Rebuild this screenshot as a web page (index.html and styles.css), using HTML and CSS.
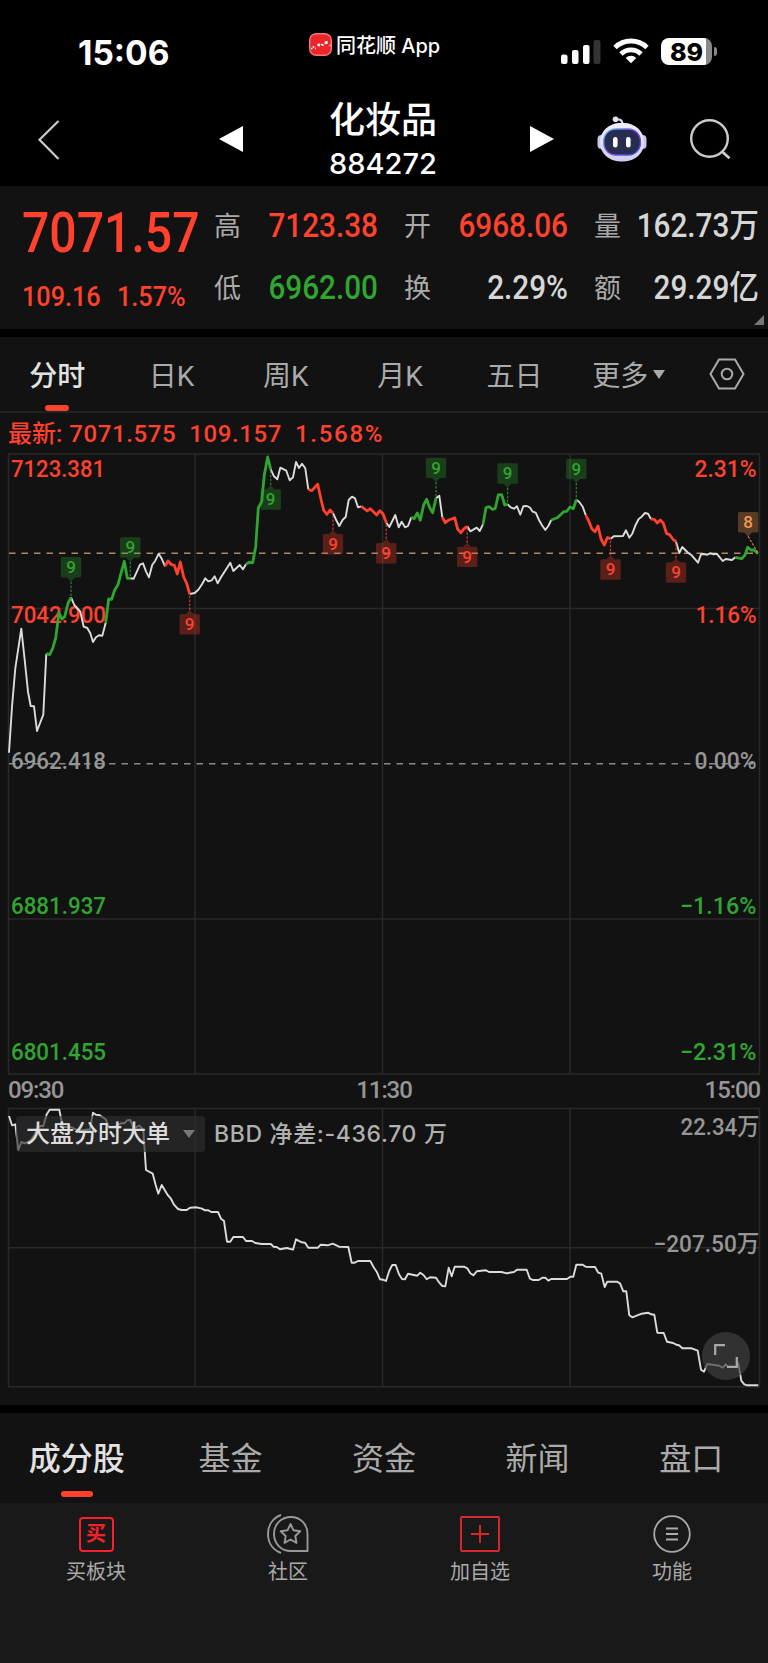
FILE: index.html
```html
<!DOCTYPE html>
<html lang="zh-CN">
<head>
    <meta charset="UTF-8">
    <meta name="viewport" content="width=device-width, initial-scale=1.0">
    <title>化妆品 884272</title>
    <link rel="stylesheet" href="styles.css">
</head>
<body>
    <!-- Status bar -->
    <div class="status">
        <div class="clock">15:06</div>
        <div class="app-name">
            <svg width="23" height="23" viewBox="0 0 23 23">
                <rect x="0.7" y="0.7" width="21.6" height="21.6" rx="6.5" fill="#ec2529" stroke="#f4777a" stroke-width="1.4"/>
                <path d="M2 15.5h1.5M4.5 15v-2M6 15.5h1M8.5 12.5l.8-1M10 10.5v3M12 12l1-1M13.8 11v2M15.500 10h1M17.500 8.500v2M20.500 12.500h1" stroke="#fff" stroke-width="1.5" fill="none"/>
                <rect x="16" y="8" width="2.500" height="3" fill="#fff"/>
            </svg>
            <span>同花顺 App</span>
        </div>
        <div class="status-icons">
            <svg width="40" height="24" viewBox="0 0 40 24">
                <rect x="0" y="14.500" width="6.500" height="9.500" rx="2" fill="#fff"/>
                <rect x="11" y="10" width="6.500" height="14" rx="2" fill="#fff"/>
                <rect x="22" y="5" width="6.500" height="19" rx="2" fill="#fff"/>
                <rect x="32.500" y="0" width="7" height="24" rx="2" fill="#333"/>
            </svg>
            <svg width="36" height="26" viewBox="0 0 36 26" fill="none" stroke="#fff" stroke-width="4.800">
                <path d="M2 9.500a23 23 0 0 1 32 0"/>
                <path d="M8 16a14.200 14.200 0 0 1 20 0"/>
                <path d="M18 25.300l-5.300-5.400a7.600 7.600 0 0 1 10.600 0z" fill="#fff" stroke="none"/>
            </svg>
            <div class="battery"><span>89</span></div>
        </div>
    </div>

    <!-- Title bar -->
    <div class="nav">
        <svg class="back" width="24" height="42" viewBox="0 0 24 42"><path d="M21.500 2L2.500 20.700L21.500 40" fill="none" stroke="#ccc" stroke-width="2.200"/></svg>
        <svg class="prev" width="24" height="26" viewBox="0 0 24 26"><path d="M24 0v26L0 13z" fill="#fff"/></svg>
        <div class="title">
            <h1>化妆品</h1>
            <p>884272</p>
        </div>
        <svg class="next" width="24" height="26" viewBox="0 0 24 26"><path d="M0 0v26L24 13z" fill="#fff"/></svg>
        <svg class="robot" width="50" height="46" viewBox="0 0 50 46">
            <defs>
                <linearGradient id="shell" x1="0" y1="0" x2="0" y2="1"><stop offset="0" stop-color="#f2f0fd"/><stop offset="1" stop-color="#cdcdee"/></linearGradient>
                <linearGradient id="rim" x1="0" y1="0" x2="1" y2="1"><stop offset="0" stop-color="#50c8e8"/><stop offset="0.500" stop-color="#8b45e8"/><stop offset="1" stop-color="#3553d8"/></linearGradient>
            </defs>
            <path d="M18.500 3.500h3.500q3.500.5 3.500 5" fill="none" stroke="#d9d8f2" stroke-width="2.200"/>
            <circle cx="18.500" cy="3.300" r="2.800" fill="#e2e1f7"/>
            <rect x="0.500" y="19" width="8" height="14" rx="4" fill="#c7c6e6"/>
            <rect x="41.500" y="19" width="8" height="14" rx="4" fill="#c7c6e6"/>
            <rect x="3" y="7" width="44" height="38.500" rx="20" ry="18.500" fill="url(#shell)"/>
            <rect x="6.800" y="13" width="36.600" height="26" rx="12" fill="#262d50" stroke="url(#rim)" stroke-width="1.300"/>
            <rect x="16" y="21" width="4.600" height="10.500" rx="2.300" fill="#fff"/>
            <rect x="29" y="21" width="4.600" height="10.500" rx="2.300" fill="#fff"/>
        </svg>
        <svg class="search" width="42" height="42" viewBox="0 0 42 42" fill="none" stroke="#ccc" stroke-width="2.400"><circle cx="19.500" cy="19.500" r="18.300"/><path d="M32 32.500l7.500 6.800" stroke-width="2.800"/></svg>
    </div>

    <!-- Quote -->
    <div class="quote">
        <div class="price">
            <strong class="num">7071.57</strong>
            <div class="change"><span class="num">109.16</span><span class="num">1.57%</span></div>
        </div>
        <div class="stats">
            <label>高</label><b class="num up">7123.38</b>
            <label>开</label><b class="num up">6968.06</b>
            <label>量</label><b class="num">162.73<i>万</i></b>
            <label>低</label><b class="num down">6962.00</b>
            <label>换</label><b class="num">2.29%</b>
            <label>额</label><b class="num">29.29<i>亿</i></b>
        </div>
        <div class="corner"></div>
    </div>

    <!-- Period tabs -->
    <div class="periods">
        <div class="tab active">分时</div>
        <div class="tab">日K</div>
        <div class="tab">周K</div>
        <div class="tab">月K</div>
        <div class="tab">五日</div>
        <div class="tab">更多<span class="caret"></span></div>
        <div class="setting">
            <svg width="36" height="32" viewBox="0 0 36 32" fill="none" stroke="#aaa" stroke-width="2"><path d="M10 1.500h16L34.500 16L26 30.500H10L1.500 16z"/><circle cx="18" cy="16" r="5.300"/></svg>
        </div>
    </div>

    <div class="latest"><span>最新:</span><span>7071.575</span><span>109.157</span><span>1.568%</span></div>

    <!-- Price chart -->
    <svg class="chart" width="768" height="626" viewBox="0 452 768 626">
        <g class="grid">
            <path d="M8.500 454H759.500V1074H8.500z"/>
            <path d="M195 454V1074M382.500 454V1074M570 454V1074M8 608.500H759M8 919H759"/>
        </g>
        <path class="base" d="M9 763.700H759"/>
        <path class="avg" d="M9 553.300H759"/>
        <g class="axis">
            <text class="up" x="11" y="477.300" textLength="94" lengthAdjust="spacingAndGlyphs">7123.381</text>
            <text class="up" x="11" y="623" textLength="95" lengthAdjust="spacingAndGlyphs">7042.900</text>
            <text x="11" y="768.500" textLength="95" lengthAdjust="spacingAndGlyphs">6962.418</text>
            <text class="down" x="11" y="914" textLength="95" lengthAdjust="spacingAndGlyphs">6881.937</text>
            <text class="down" x="11" y="1059.500" textLength="95" lengthAdjust="spacingAndGlyphs">6801.455</text>
            <text class="up" x="694.500" y="477.300" textLength="62" lengthAdjust="spacingAndGlyphs">2.31%</text>
            <text class="up" x="695.500" y="623" textLength="61" lengthAdjust="spacingAndGlyphs">1.16%</text>
            <text x="694.500" y="768.500" textLength="62" lengthAdjust="spacingAndGlyphs">0.00%</text>
            <text class="down" x="680" y="914" textLength="76.500" lengthAdjust="spacingAndGlyphs">−1.16%</text>
            <text class="down" x="680" y="1059.500" textLength="76.500" lengthAdjust="spacingAndGlyphs">−2.31%</text>
        </g>
        <g class="line">
            <polyline points="9,752.700 12,706.700 15.300,668.300 21.300,628.700 24.700,660 28,691.700 30.700,706 34,706.300 37,731 43.300,714.700 46.300,653.700"/>
            <polyline points="71,597.300 74.300,605 80.300,611.700 83.700,626.700 87.300,628 90.300,633.300 93,642 96,637.300 99,635.300 102.300,635.700 105.700,622.700"/>
            <polyline points="130.300,578.300 133.700,578.700 140,564.700 143,563.300 146,571.300 149,577.300 152.300,564.700 155.300,560.700 158.700,553.700 161.700,558.700 165,566.300"/>
            <polyline points="189.700,594 194.700,593 198.300,589.700 202,584.300 205.300,578.300 208.300,581.300 211.700,580.300 214.700,576.300 217.700,583.300 221,577.300 230.300,562.700 233.300,571 239.700,565 243,569.300 246,564.300"/>
            <polyline points="270.700,469.300 274,476.300 277.300,479.300 280.300,467.700 286.300,470.700 289.700,480.300 293,477.300 296,462 299,468 302,463.700 305.300,468.300 308.300,489.300"/>
            <polyline points="333,513 336.300,520.300 339.300,526 342.700,519.700 345.700,517 348.700,500 352,496.700 355,498.300 358,507.300 361.300,506.300"/>
            <polyline points="386.300,522.700 389.300,527 395.300,515 398.700,527.300 401.700,521.700 405,527.300 408,526 411.300,517.300"/>
            <polyline points="436,498.300 439.300,495.700 442.300,517.300"/>
            <polyline points="467.300,526.300 470.300,531.300 476.700,527.700 479.700,531 483,524.300"/>
            <polyline points="507.700,504.300 510.700,507.300 514,508.700 517,506.300 520.300,514.700 523.300,506.300 526.700,506 529.700,507.300 532.700,511.700 535.700,512.700 539,520 542,525.300 545.300,530 548.300,526 551.300,520"/>
            <polyline points="576.300,499.700 579.300,502 582.700,506.700 585.700,515"/>
            <polyline points="610.700,538.700 613.700,536.300 623,536 626,530.300 629.300,537.700 632.300,533.700 635.700,524.700 638.700,519 641.700,516.700 645,513 648,513.700 651,519"/>
            <polyline points="676,541.700 679.300,553 682.300,547 688.300,553 691.700,555.300 698,562.700 701,554.300 704,554 707.300,554.700 710.300,553.300 713.300,554.300 716.700,553.700 722.700,561 725.700,559 732,560 735.300,557.300"/>
        </g>
        <g class="line rise">
            <polyline points="46.300,653.700 49.700,654.700 52.700,648.300 55.700,638 59,613 62,619 64.700,616.700 68,603.300 71,597.300"/>
            <polyline points="105.700,622.700 108.700,599 111.700,599.300 114.700,590 118,584.700 121,573.300 124.300,561.300 127.300,578.300 130.300,578.300"/>
            <polyline points="246,564.300 249.300,562.300 252.700,562.700 255.700,546.700 258.300,508 261.700,501.700 264.300,475 267.700,457 270.700,469.300"/>
            <polyline points="411.300,517.300 414.300,518.700 417.300,513 420.300,520.300 423.700,504.700 426.700,499.300 429.700,507.700 432.700,512.700 436,498.300"/>
            <polyline points="483,524.300 486,507.700 489.300,506.700 492.300,509.300 495.300,508.300 498.300,495 501.700,494.700 504.700,505 507.700,504.300"/>
            <polyline points="551.300,520 557.300,517.700 563.700,511.700 566.700,511.300 570,507 573.300,508.700 576.300,499.700"/>
            <polyline points="735.300,557.300 741.700,558.700 745,555 747.700,547.300 751,550 754,550 758,553.700"/>
        </g>
        <g class="line fall">
            <polyline points="165,566.300 168,561 171,564.300 174.300,565.300 177.300,574 180.300,562 183.700,577 186.700,583.300 189.700,594"/>
            <polyline points="308.300,489.300 311.700,490.700 317.700,484.300 321,499.300 323.700,510.300 327,514.300 330,510 333,513"/>
            <polyline points="361.300,506.300 367.300,511 370.300,508.700 376.700,515 379.700,510.700 383,513.700 386.300,522.700"/>
            <polyline points="442.300,517.300 445.300,522.700 448.300,520.300 454.700,517.700 457.700,529.300 461,532.700 464,528.700 467.300,526.300"/>
            <polyline points="585.700,515 589,521.700 592,529 595,531.700 598,526 601,539 604.300,545 607.300,537.700 610.700,538.700"/>
            <polyline points="651,519 654.300,519.300 657.300,523 660.300,520 663.300,523.300 666.700,533.700 669.700,534.700 673,539.300 676,541.700"/>
        </g>
        <g id="marks"></g>
    </svg>

    <div class="times"><span>09:30</span><span>11:30</span><span>15:00</span></div>

    <!-- BBD chart -->
    <div class="bbd">
        <svg class="chart" width="768" height="299" viewBox="0 1106 768 299">
            <g class="grid">
                <path d="M8.500 1108.500H759.500V1386.700H8.500z"/>
                <path d="M195 1108V1387M382.500 1108V1387M570 1108V1387M8 1247.700H759"/>
            </g>
            <g class="axis">
                <text x="680.500" y="1134.500" textLength="79" lengthAdjust="spacingAndGlyphs">22.34万</text>
                <text x="653.500" y="1252" textLength="106" lengthAdjust="spacingAndGlyphs">−207.50万</text>
            </g>
            <g class="line">
                <polyline points="9,1116 12,1125.300 15.300,1124.300 18.300,1150 21.300,1142 24.700,1143.300 28,1142 31,1140 34.300,1135 37.300,1129.300 40.300,1126 43.300,1126 46.700,1114.300 49.700,1109.700 59.300,1109.700 62.700,1126.700 71.700,1127.300 78.300,1130.700 90,1129.300 93,1112.700 96,1114.700 99.300,1115 105.700,1119.300 108.700,1126.700 115,1126.700 121,1123.300 124.300,1123.300 127.300,1120.300 130.300,1120 133.300,1128.300 139.700,1125.700 143.300,1130 146,1170 152.700,1173.700 155.700,1185 158.300,1193.700 161.700,1185 167.700,1195 170.700,1198.300 174,1204.700 178,1209 181.700,1210 186.700,1210 190,1207.700 196.700,1207.300 202,1208.700 205,1210.300 208.300,1210.300 211.300,1212 218,1212 221,1218.700 224,1221 227,1241.700 230.300,1241.700 233.300,1237 243,1237 246,1241 252,1241 255.300,1243 261.700,1244 270.700,1244 273.700,1246.700 276.700,1247 280,1249.300 286.700,1248 293,1249.700 296,1239.300 301.700,1242.300 305,1242.700 308.300,1247.700 318,1247.700 320.700,1244.700 327.700,1245.300 332.700,1243.700 339,1246.700 348.300,1247 351.700,1262.700 354.700,1262.700 358,1261 370.300,1261 373.700,1267.300 376.700,1271.700 380,1279.300 383,1279.700 386,1281 389.300,1270.700 392.300,1265 395.700,1265 399,1274.300 402,1279 405,1279.300 408,1273.700 417.300,1275.700 420.300,1272.700 423.700,1275.300 426.700,1279.300 430,1277.300 436,1277.700 439.300,1282.700 442.300,1286 445.300,1286.300 448.700,1267.700 451.700,1276.300 454.700,1266.700 464,1266.700 467.300,1268.300 470.300,1273.300 473.300,1275.300 476.700,1271.300 486,1270.300 489,1272 501.700,1272 506.700,1273.300 514,1272 517,1269.700 526.700,1269.700 529.700,1278.300 532.700,1280 538.700,1280 542.300,1277.700 545.300,1277.700 548.300,1280.700 551.300,1279 567,1279 570.300,1276.700 573.300,1276.700 576.300,1264.700 582.700,1264.700 585.700,1266.700 595,1267 598.300,1272.700 601.300,1273.700 604.700,1287 607.300,1281.700 617,1281.700 620,1283.300 623.300,1291.300 626.300,1291.300 629.300,1315.300 632.300,1317.300 641.700,1313.700 648,1312.700 651.300,1314.300 654.300,1314.700 657.300,1332.700 663.700,1333 667,1341.700 673,1343 676.300,1344.700 679,1345.300 682.300,1348.300 691.700,1348.300 697.700,1350.700 701,1369.700 704,1371.700 707.300,1364 719.300,1365.700 722.700,1367.700 725.700,1364.300 728,1367 736,1367 738.300,1363.300 741.300,1380.700 744.300,1384.300 747.300,1385.300 758.300,1385.300"/>
            </g>
        </svg>
        <div class="bbd-head">
            <div class="picker">大盘分时大单<span class="caret"></span></div>
            <div class="bbd-value">BBD 净差:-436.70 万</div>
        </div>
        <div class="expand">
            <svg width="24" height="24" viewBox="0 0 24 24" fill="none" stroke="#aaa" stroke-width="2.200"><path d="M1.200 11V1.200H11M13 22.800H22.800V13"/></svg>
        </div>
    </div>

    <!-- Section tabs -->
    <div class="sections">
        <div class="tab active">成分股</div>
        <div class="tab">基金</div>
        <div class="tab">资金</div>
        <div class="tab">新闻</div>
        <div class="tab">盘口</div>
    </div>

    <!-- Bottom bar -->
    <div class="toolbar">
        <div class="tool">
            <div class="buy-icon">买</div>
            <span>买板块</span>
        </div>
        <div class="tool">
            <svg width="42" height="40" viewBox="0 0 42 40" fill="none" stroke="#999" stroke-width="1.900">
                <path d="M24 3C14 3 7 10.500 7 20S14 37 24 37H40.500V20C40.500 10.500 33.500 3 24 3z"/>
                <path d="M14 1C6 4 1 11 1 20S6 36 14 39"/>
                <path d="M23.500 10l3 6.300 6.800.9-5 4.800 1.200 6.800-6-3.300-6 3.300 1.200-6.800-5-4.800 6.800-.9z" stroke-linejoin="round"/>
            </svg>
            <span>社区</span>
        </div>
        <div class="tool">
            <svg width="40" height="36" viewBox="0 0 40 36" fill="none" stroke="#d9282d" stroke-width="1.900"><rect x="1" y="1" width="38" height="34" rx="1"/><path d="M20 9v18M11 18h18"/></svg>
            <span>加自选</span>
        </div>
        <div class="tool">
            <svg width="38" height="38" viewBox="0 0 38 38" fill="none" stroke="#aaa" stroke-width="1.800"><circle cx="19" cy="19" r="17.800"/><path d="M13 13.500h12M13 19h12M13 24.500h12" stroke-width="2.200"/></svg>
            <span>功能</span>
        </div>
    </div>

    <script>
        // x, top of the box, side the pointer is on, end of the dotted stem, type
        const marks = [
            [71, 557, 'down', 597, 'rise'],
            [130.3, 537.3, 'down', 578, 'rise'],
            [189.7, 614, 'up', 594, 'fall'],
            [270.7, 489.3, 'up', 469, 'rise'],
            [333, 534, 'up', 513, 'fall'],
            [386.2, 543, 'up', 523, 'fall'],
            [436, 457.7, 'down', 498, 'rise'],
            [467.2, 546.7, 'up', 526, 'fall'],
            [507.6, 463.3, 'down', 504, 'rise'],
            [576.3, 458.7, 'down', 500, 'rise'],
            [610.5, 559.3, 'up', 539, 'fall'],
            [676, 562.3, 'up', 542, 'fall'],
            [748.2, 512, 'down', 553, 'warn']
        ];

        document.getElementById('marks').innerHTML = marks.map(([x, y, side, end, type]) => {
            const base = side === 'down' ? y + 20.4 : y;
            const tip = side === 'down' ? base + 4 : base - 4;
            const endX = type === 'warn' ? 758 : x;
            return `
                <g class="mark ${type}">
                    <path class="stem" d="M${x} ${tip}L${endX} ${end}"/>
                    <rect x="${x - 10.2}" y="${y}" width="20.4" height="20.4" rx="1.5"/>
                    <path class="tip" d="M${x - 4} ${base}L${x} ${tip}L${x + 4} ${base}z"/>
                    <text x="${x}" y="${y + 16}">${type === 'warn' ? 8 : 9}</text>
                </g>`;
        }).join('');
    </script>
</body>
</html>
```
FILE: styles.css
```css
* {
    box-sizing: border-box;
}
body {
    margin: 0;
    width: 768px;
    height: 1663px;
    overflow: hidden;
    background: #000;
    color: #d6d6d6;
    font-family: Roboto, "Noto Sans CJK SC", sans-serif;
}
h1, p {
    margin: 0;
    font-weight: 500;
}
svg {
    display: block;
    flex: none;
}
.up {
    color: #ff412e;
    fill: #ff412e;
}
.down {
    color: #30a530;
    fill: #30a530;
}
.caret {
    border: 6px solid transparent;
    border-top: 9px solid #aaa;
    border-bottom: 0;
}

/* status bar */
.status {
    height: 92px;
    padding: 0 51px 0 78px;
    display: flex;
    color: #fff;
    font-family: Inter, "Noto Sans CJK SC", sans-serif;
}
.clock {
    width: 231px;
    padding-top: 33px;
    font-size: 33.5px;
    line-height: 40px;
    font-weight: 700;
}
.app-name {
    width: 252px;
    padding-top: 33px;
    display: flex;
    gap: 4px;
    font-size: 20px;
    line-height: 27px;
    font-weight: 500;
    white-space: nowrap;
}
.status-icons {
    display: flex;
    align-items: flex-start;
    padding-top: 38px;
}
.status-icons svg:nth-child(1) {
    margin-top: 2px;
}
.status-icons svg:nth-child(2) {
    margin-left: 12px;
}
.battery {
    position: relative;
    width: 51px;
    height: 27px;
    margin-left: 12px;
    border-radius: 8px;
    background: linear-gradient(90deg, #fff 45px, #888 45px);
    color: #000;
    font-size: 25px;
    line-height: 28px;
    font-weight: 800;
    text-align: center;
}
.battery::after {
    content: "";
    position: absolute;
    right: -5px;
    top: 9px;
    width: 3px;
    height: 9px;
    border-radius: 0 3px 3px 0;
    background: #888;
}

/* title bar */
.nav {
    height: 94px;
    display: flex;
    align-items: flex-start;
    padding-left: 37px;
}
.back {
    margin-top: 27px;
}
.prev {
    margin: 34px 0 0 158px;
}
.title {
    width: 287px;
    height: 94px;
    padding: 3px 7px 0 0;
    color: #fff;
    text-align: center;
}
.title h1 {
    font-size: 36px;
    line-height: 52px;
}
.title p {
    font-family: Inter, sans-serif;
    font-size: 29px;
    line-height: 34px;
}
.next {
    margin-top: 34px;
}
.robot {
    margin: 24px 0 0 43px;
}
.search {
    margin: 27px 0 0 43px;
}

/* quote */
.quote {
    position: relative;
    height: 143px;
    display: flex;
    background: #121212;
}
.num {
    display: inline-block;
    font-weight: 500;
    white-space: nowrap;
}
.price {
    width: 214px;
    padding: 15px 0 0 22px;
    color: #ff412e;
}
.price strong {
    font-size: 55px;
    line-height: 64px;
    transform: scaleX(0.875);
    transform-origin: left;
}
.change {
    display: flex;
    margin-top: 15px;
    font-size: 28px;
    line-height: 34px;
}
.change span {
    width: 95px;
    transform: scaleX(0.9);
    transform-origin: left;
}
.stats {
    display: grid;
    grid-template-columns: 27px 137px 53px 137px 53px 138px;
    grid-template-rows: 62px 62px;
    padding-top: 9px;
    align-items: center;
}
.stats label {
    padding-top: 2px;
    font-size: 27px;
    color: #aaa;
    text-align: right;
    line-height: 40px;
}
.stats b {
    font-size: 33px;
    line-height: 40px;
    text-align: right;
    transform: scaleX(0.9);
    transform-origin: right;
}
.stats i {
    font-style: normal;
}
.corner {
    position: absolute;
    right: 4px;
    bottom: 4px;
    border-left: 10px solid transparent;
    border-bottom: 10px solid #777;
}

/* period tabs */
.periods {
    height: 76px;
    margin-top: 8px;
    display: flex;
    background: #121212;
    border-bottom: 2px solid #222;
    color: #aaa;
    font-size: 28px;
}
.tab {
    position: relative;
    display: flex;
    justify-content: center;
    align-items: center;
    flex: 1;
}
.tab.active {
    color: #e2e2e2;
    font-weight: 500;
}
.tab.active::after {
    content: "";
    position: absolute;
    bottom: 0;
    width: 24px;
    height: 6px;
    border-radius: 3px;
    background: #ff412e;
}
.periods .caret {
    margin-left: 5px;
}
.setting {
    width: 82px;
    padding: 21px 0 0 23px;
}

.latest {
    height: 39px;
    padding: 3px 0 0 8px;
    display: flex;
    background: #121212;
    color: #ff412e;
    font-size: 24px;
    line-height: 36px;
    font-weight: 500;
    letter-spacing: 0.6px;
}
.latest span {
    margin-right: 13px;
}
.latest span:first-child {
    margin-right: 7px;
    letter-spacing: 0;
}
.latest span:last-child {
    letter-spacing: 1.7px;
}

/* charts */
.chart {
    background: #121212;
}
.grid path {
    fill: none;
    stroke: #292929;
    stroke-width: 1.5;
}
.base, .avg {
    stroke: #888;
    stroke-width: 1.4;
    stroke-dasharray: 6.500 6;
}
.avg {
    stroke: #ad8862;
}
.axis text {
    font-size: 24px;
    font-weight: 500;
}
.axis text:not(.up):not(.down) {
    fill: #969696;
}
.line {
    fill: none;
    stroke: #dcdcdc;
    stroke-width: 1.9;
    stroke-linejoin: round;
}
.line.rise {
    stroke: #30a530;
    stroke-width: 2.8;
}
.line.fall {
    stroke: #ff412e;
    stroke-width: 2.8;
}
.mark {
    color: #30a530;
}
.mark.fall {
    color: #ff412e;
}
.mark.warn {
    color: #f59a52;
}
.mark rect, .tip {
    fill: currentColor;
    fill-opacity: 0.3;
}
.stem {
    stroke: currentColor;
    stroke-width: 1.2;
    stroke-dasharray: 2.500 1.500;
    opacity: 0.8;
}
.mark text {
    fill: currentColor;
    font-size: 17px;
    font-weight: 500;
    text-anchor: middle;
}
.times {
    height: 28px;
    padding: 0 8px;
    display: flex;
    justify-content: space-between;
    background: #121212;
    color: #969696;
    font-size: 24px;
    line-height: 25px;
    font-weight: 500;
    letter-spacing: -1.1px;
}
.bbd {
    position: relative;
}
.bbd-head {
    position: absolute;
    left: 16px;
    top: 10px;
    display: flex;
    line-height: 36px;
    color: #b0b0b0;
}
.picker {
    width: 189px;
    height: 36px;
    padding-left: 10px;
    display: flex;
    align-items: center;
    border-radius: 4px;
    background: rgba(46, 46, 46, 0.65);
    color: #ddd;
    font-size: 24px;
    font-weight: 500;
}
.picker .caret {
    margin-left: 13px;
    border-width: 8px 6px 0;
    border-top-color: #777;
}
.bbd-value {
    margin-left: 9px;
    font-family: Inter, "Noto Sans CJK SC", sans-serif;
    font-size: 23px;
    font-weight: 500;
    letter-spacing: 0.65px;
    white-space: nowrap;
}
.expand {
    position: absolute;
    left: 702px;
    top: 226px;
    width: 48px;
    height: 48px;
    padding: 12px;
    border-radius: 50%;
    background: rgba(62, 62, 62, 0.7);
}

/* section tabs */
.sections {
    height: 90px;
    margin-top: 8px;
    padding-bottom: 4px;
    display: flex;
    background: #121212;
    color: #aaa;
    font-size: 32px;
}
.sections .tab.active::after {
    bottom: 2px;
    width: 32px;
}

/* bottom bar */
.toolbar {
    height: 160px;
    display: flex;
    background: #191919;
}
.tool {
    flex: 1;
    height: 86px;
    padding-top: 11px;
    display: grid;
    grid-template-rows: 40px 32px;
    place-items: center;
    color: #aaa;
    font-size: 20px;
}
.buy-icon {
    width: 35px;
    height: 35px;
    border: 2px solid #f5222d;
    border-radius: 4px;
    color: #f5222d;
    font-size: 20px;
    line-height: 30px;
    font-weight: 700;
    text-align: center;
}
```
